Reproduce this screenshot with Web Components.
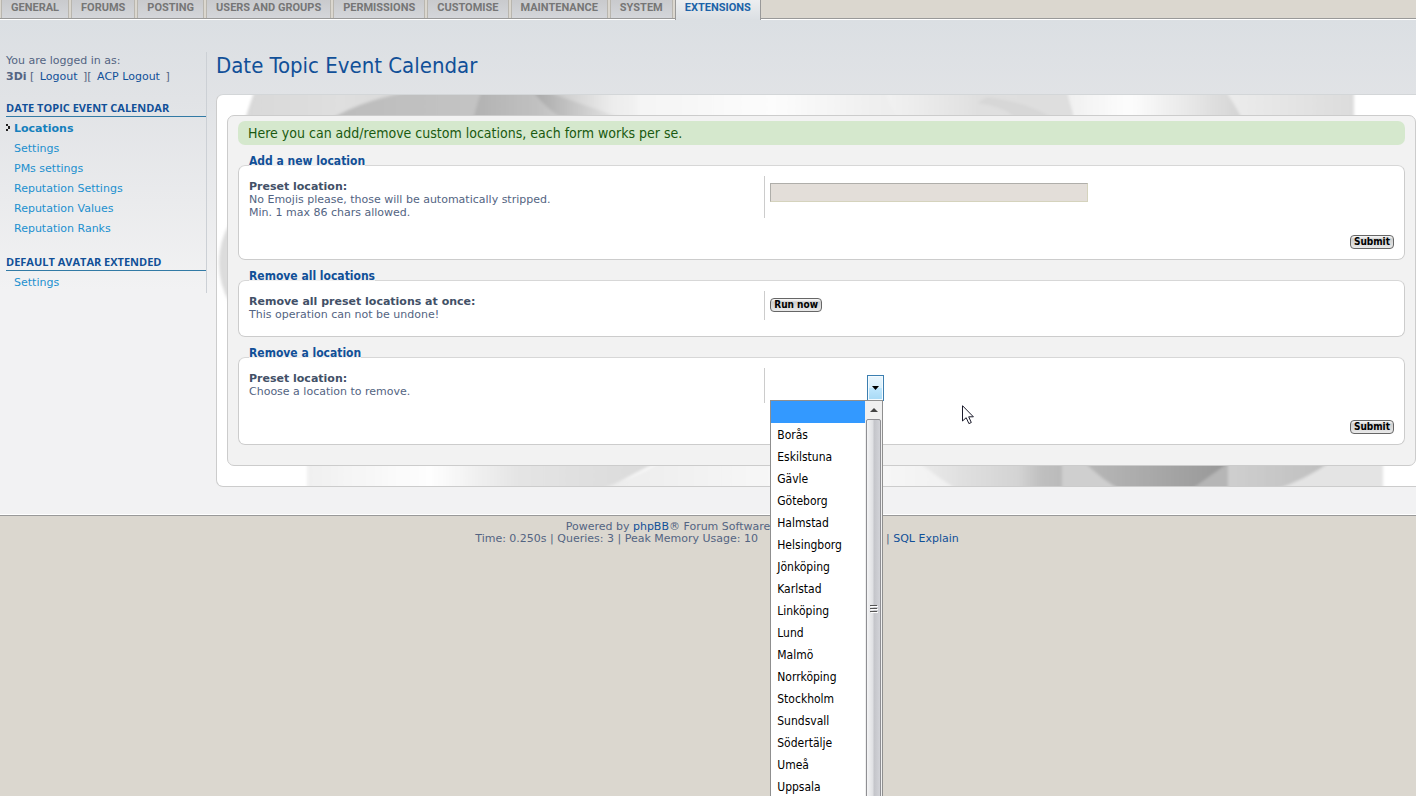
<!DOCTYPE html>
<html lang="en">
<head>
<meta charset="utf-8">
<title>Date Topic Event Calendar</title>
<style>
html, body { margin: 0; }
body {
  background: #dbd7cf;
  color: #536482;
  font: 11px/16px "DejaVu Sans", Verdana, sans-serif;
  overflow: hidden;
}
</style>
</head>
<body>
<acp-app></acp-app>

<template id="tabs-template">
<style>
:host { display: block; }
ul { display: flex; gap: 2px; margin: 0; padding: 0 0 0 1px; list-style: none; height: 20px;
  background: linear-gradient(#999, #999) 0 18px / 100% 1px no-repeat, linear-gradient(#fff, #fff) 0 19px / 100% 1px no-repeat; }
a { display: block; box-sizing: border-box; height: 18px; padding: 0 9px; border: solid #b9b6af; border-width: 0 1px;
  background: linear-gradient(#c9cacd, #d4d6da); color: #767676; text-decoration: none;
  font: bold 11px/16px Roboto, "Liberation Sans", sans-serif; text-transform: uppercase; }
a[aria-current] { height: 20px; border-color: #999; color: #1c63a8; background: linear-gradient(#eceef0, #dbdfe3); }
</style>
<nav aria-label="Sections"><ul></ul></nav>
</template>

<template id="menu-template">
<style>
:host { display: block; box-sizing: border-box; width: 201px; border-right: 1px solid #ccd0d5; }
p { margin: 0; padding-top: 1px; }
p a { padding: 0 2px; color: #115098; text-decoration: none; }
b { color: #536482; }
h2 { margin: 16px 0 2px; padding-bottom: 1px; border-bottom: 1px solid #327aa5; color: #115098;
  font: bold 11px/14px "Open Sans", sans-serif; text-transform: uppercase; }
ul { margin: 0; padding: 0; list-style: none; }
li { position: relative; padding-left: 8px; line-height: 20px; }
li a { color: #1c90cf; text-decoration: none; }
li a[aria-current] { font-weight: bold; color: #1580bd; }
svg { position: absolute; left: 0; top: 5px; }
</style>
<p>You are logged in as:<br><b>3Di</b> [ <a href="#">Logout</a> ][ <a href="#">ACP Logout</a> ]</p>
<nav aria-label="Modules"></nav>
</template>

<template id="fieldset-template">
<style>
:host { display: block; }
fieldset { position: relative; margin: 0; padding: 10px; min-width: 0; background: #fff;
  border: 1px solid #ccc; border-top-color: #d7d7d7; border-radius: 7px; }
legend { position: absolute; top: -11px; left: 10px; padding: 0; color: #115098;
  background: linear-gradient(#f2f2f2 11px, transparent 11px);
  font: bold 12px/12px "DejaVu Sans Condensed", "DejaVu Sans", Tahoma, sans-serif; }
.row { display: grid; grid-template-columns: 45fr 55fr; margin-bottom: 6px; }
.text { padding-top: 4px; margin-bottom: -1px; line-height: 13px; }
.text ::slotted(label) { display: block; font-weight: bold; color: #425067; }
.field { display: flex; align-items: flex-start; border-left: 1px solid #ccc; padding: 7px 0 2px 5px; }
.actions { display: flex; justify-content: flex-end; }
.actions ::slotted(button) { margin-top: 11px; }
</style>
<fieldset>
  <legend></legend>
  <div class="row">
    <div class="text"><slot name="label"></slot><slot name="hint"></slot></div>
    <div class="field"><slot name="field"></slot></div>
  </div>
  <div class="actions"><slot name="action"></slot></div>
</fieldset>
</template>

<template id="list-template">
<style>
:host { position: absolute; z-index: 2; top: 25px; left: 0; box-sizing: border-box; width: 113px; height: 442px;
  display: grid; grid-template-columns: 1fr 17px; background: #fff; border: 1px solid #8f8f8f; color: #000;
  font: 12px/24px "DejaVu Sans Condensed", "DejaVu Sans", Tahoma, sans-serif; }
ul { margin: 0; padding: 0; list-style: none; }
li { height: 22px; padding-left: 6px; }
li[aria-selected="true"] { background: #3399ff; }
.bar { display: flex; flex-direction: column; background: #f0f0f0; }
.up { height: 18px; display: grid; place-items: center; }
.thumb { height: 380px; margin: 0 1px; box-sizing: border-box; border: 1px solid #8f8f93; border-radius: 2px;
  background: linear-gradient(90deg, #f4f4f5, #dfe0e3 45%, #c4c5ca 55%, #d2d3d8); display: grid; place-items: center; }
</style>
<ul role="listbox" aria-label="Locations"></ul>
<div class="bar" aria-hidden="true">
  <div class="up"><svg width="8" height="4" viewBox="0 0 8 4"><path d="M0 4 4 0 8 4z" fill="#444"/></svg></div>
  <div class="thumb"><svg width="8" height="9" viewBox="0 0 8 9" shape-rendering="crispEdges"><path d="M0 .5h7M0 3.500h7M0 6.500h7" stroke="#555"/><path d="M1 1.500h7M1 4.500h7M1 7.500h7" stroke="#fff"/></svg></div>
</div>
</template>

<template id="swirl-template">
<style>:host { position: absolute; inset: 0; overflow: hidden; border-radius: 6px; } svg { display: block; width: 100%; height: 100%; }</style>
<svg viewBox="0 0 1209 391" preserveAspectRatio="none" aria-hidden="true">
  <defs>
    <filter id="soft" x="-5%" y="-5%" width="110%" height="110%"><feGaussianBlur stdDeviation="1.5"/></filter>
    <linearGradient id="t1"><stop offset="0" stop-color="#d8d8d8"/><stop offset=".35" stop-color="#dfdfdf"/><stop offset="1" stop-color="#cfcfcf"/></linearGradient>
    <linearGradient id="t2"><stop offset="0" stop-color="#bcbcbc"/><stop offset="1" stop-color="#c5c5c5"/></linearGradient>
    <linearGradient id="t3"><stop offset="0" stop-color="#b2b2b2"/><stop offset=".4" stop-color="#c2c2c2"/><stop offset=".8" stop-color="#ececec"/><stop offset="1" stop-color="#f4f4f4"/></linearGradient>
    <linearGradient id="t4"><stop offset="0" stop-color="#a8a8a8"/><stop offset="1" stop-color="#ececec"/></linearGradient>
    <linearGradient id="t5"><stop offset="0" stop-color="#f4f4f4"/><stop offset=".4" stop-color="#fcfcfc"/><stop offset=".7" stop-color="#efefef"/><stop offset="1" stop-color="#e8e8e8"/></linearGradient>
    <linearGradient id="t6"><stop offset="0" stop-color="#f2f2f2"/><stop offset=".5" stop-color="#dfdfdf"/><stop offset="1" stop-color="#dedede"/></linearGradient>
    <linearGradient id="t7"><stop offset="0" stop-color="#f0f0f0"/><stop offset=".35" stop-color="#fdfdfd"/><stop offset="1" stop-color="#d2d2d2"/></linearGradient>
    <linearGradient id="t8"><stop offset="0" stop-color="#ececec"/><stop offset="1" stop-color="#dcdcdc"/></linearGradient>
    <linearGradient id="b1"><stop offset="0" stop-color="#f0f0f0"/><stop offset=".35" stop-color="#fefefe"/><stop offset=".6" stop-color="#e4e4e4"/><stop offset="1" stop-color="#dadada"/></linearGradient>
    <linearGradient id="b2"><stop offset="0" stop-color="#ebebeb"/><stop offset=".6" stop-color="#fafafa"/><stop offset="1" stop-color="#f0f0f0"/></linearGradient>
    <linearGradient id="b3"><stop offset="0" stop-color="#eaeaea"/><stop offset=".7" stop-color="#d3d3d3"/><stop offset=".85" stop-color="#c0c0c0"/><stop offset="1" stop-color="#bababa"/></linearGradient>
    <linearGradient id="b4"><stop offset="0" stop-color="#b8b8b8"/><stop offset="1" stop-color="#979797"/></linearGradient>
    <linearGradient id="b5"><stop offset="0" stop-color="#cfcfcf"/><stop offset="1" stop-color="#bebebe"/></linearGradient>
  </defs>
  <g filter="url(#soft)">
    <path d="M38-5Q33 8 28 25H300V-5z" fill="url(#t1)"/>
    <path d="M112 25Q150 2 205-5H300V25z" fill="url(#t2)"/>
    <path d="M265-5Q260 8 256 25H430V-5z" fill="url(#t3)"/>
    <path d="M315-5Q332 18 350 25H410Q350 4 325-5z" fill="url(#t4)"/>
    <path d="M420-5H760V25H420z" fill="url(#t5)"/>
    <path d="M668-5Q672 10 682 25H858L850-5z" fill="url(#t6)"/>
    <path d="M760 8Q790 12 800 25H838Q815 8 770 2z" fill="#d0d0d0" opacity=".5"/>
    <path d="M850-5Q853 12 860 25H1030L1010-5z" fill="url(#t7)"/>
    <path d="M1008-5Q1018 10 1026 25H1137V-5z" fill="url(#t8)"/>
    <ellipse cx="38" cy="168" rx="36" ry="55" fill="#dcdcdc"/>
    <path d="M90 366H442L385 396H90z" fill="url(#b1)"/>
    <path d="M445 366H750V396H378Q415 384 445 366z" fill="url(#b2)"/>
    <path d="M700 366H845V396H742Q720 382 700 366z" fill="url(#b3)"/>
    <path d="M845 366H1010V396H845z" fill="#cfcfcf"/>
    <path d="M866 366Q886 386 906 396H972Q1000 380 1014 366z" fill="url(#b4)"/>
    <path d="M1014 366 972 396H1011V366z" fill="#b6b6b6"/>
    <path d="M1011 366H1115Q1090 384 1060 396H1011z" fill="url(#b5)"/>
    <path d="M1115 366H1166V396H1055Q1090 384 1115 366z" fill="#e4e4e4"/>
  </g>
</svg>
</template>

<template id="app-template">
<style>
:host { display: block; position: relative; min-height: 100vh; overflow: hidden; }
.content { display: grid; grid-template-columns: 201px minmax(0, 1fr); gap: 9px; align-items: start; padding: 32px 0 28px 6px;
  background: linear-gradient(#dbdfe3 0, #e1e3e6 80px, #f2f2f3 270px); border-bottom: 1px solid #999; box-shadow: inset 0 -1px #fff; }
h1 { margin: 0; padding: 1px 0 15px; color: #115098; font: normal 22px/26px "DejaVu Sans Condensed", "DejaVu Sans", "Trebuchet MS", sans-serif; }
.panel { position: relative; margin-right: -11px; padding: 20px 10px; background: #fff; border: 1px solid #ccc; border-top-color: #d3d6d8; border-radius: 7px; }
.inner { position: relative; display: flex; flex-direction: column; gap: 20px; padding: 5px 10px 20px; background: #f2f2f2;
  border: 1px solid #ccc; border-radius: 7px; }
.note { margin: 0; padding: 4px 10px; border-radius: 7px; background: #d5e8cd; color: #1a5a10;
  font: 14px/16px "DejaVu Sans Condensed", "DejaVu Sans", Tahoma, sans-serif; }
button { height: 14px; padding: 0 3px; border: 1px solid #666; border-radius: 4px; background: linear-gradient(#f4f4f4 1px, #cfcfcf 3px, #e9e9e9); color: #000;
  font: bold 10px/12px "DejaVu Sans Condensed", "DejaVu Sans", Tahoma, sans-serif; }
input { box-sizing: border-box; width: 318px; height: 19px; padding: 0 4px; border: 1px solid #d5d3bd; border-top-color: #afaeaa; border-left-color: #afaeaa; border-radius: 0; background: #e3ded9; font: inherit; }
.drop { position: relative; width: 114px; height: 26px; }
select { appearance: none; display: block; width: 114px; height: 26px; border: 0; padding: 0 20px 0 6px; background: #fff; font: inherit; }
.arrow { position: absolute; top: 0; right: 0; box-sizing: border-box; width: 17px; height: 26px; display: grid; place-items: center;
  border: 1px solid #3c7fb1; background: linear-gradient(#eaf6fd, #d9f0fc 48%, #bee6fd 52%, #a7d9f5); box-shadow: inset 0 0 0 1px #f4fbff; pointer-events: none; }
footer { display: flex; flex-direction: column; align-items: center; padding: 5px 0 0 18px; line-height: 12px; }
footer p { display: flex; margin: 0; white-space: pre; }
footer .credit { padding-right: 98px; }
footer .stats { gap: 128px; }
footer a { color: #115098; text-decoration: none; }
.pointer { position: absolute; left: 962px; top: 405px; }
</style>
<acp-tabs></acp-tabs>
<div class="content">
  <acp-menu></acp-menu>
  <main>
    <h1>Date Topic Event Calendar</h1>
    <div class="panel">
      <panel-swirl></panel-swirl>
      <div class="inner">
        <p class="note">Here you can add/remove custom locations, each form works per se.</p>
        <acp-fieldset legend="Add a new location">
          <label slot="label" for="new-location">Preset location:</label>
          <span slot="hint">No Emojis please, those will be automatically stripped.<br>Min. 1 max 86 chars allowed.</span>
          <input slot="field" id="new-location" type="text" maxlength="86">
          <button slot="action" type="submit">Submit</button>
        </acp-fieldset>
        <acp-fieldset legend="Remove all locations">
          <label slot="label" for="purge">Remove all preset locations at once:</label>
          <span slot="hint">This operation can not be undone!</span>
          <button slot="field" id="purge" type="button">Run now</button>
        </acp-fieldset>
        <acp-fieldset legend="Remove a location">
          <label slot="label" for="old-location">Preset location:</label>
          <span slot="hint">Choose a location to remove.</span>
          <div slot="field" class="drop">
            <select id="old-location"><option selected></option></select>
            <span class="arrow"><svg width="7" height="4" viewBox="0 0 7 4"><path d="M0 0H7L3.500 4z"/></svg></span>
            <location-list></location-list>
          </div>
          <button slot="action" type="submit">Submit</button>
        </acp-fieldset>
      </div>
    </div>
  </main>
</div>
<footer>
  <p class="credit"><span>Powered by <a href="#">phpBB</a>® Forum Software</span></p>
  <p class="stats"><span>Time: 0.250s | Queries: 3 | Peak Memory Usage: 10</span><span>| <a href="#">SQL Explain</a></span></p>
</footer>
<svg class="pointer" width="12" height="20" viewBox="0 0 12 20" aria-hidden="true"><path d="M.5.700V16L4.200 12.700 6.900 18.600 9.300 17.500 6.700 11.800H11.400z" fill="#fff" stroke="#1b1b2b"/></svg>
</template>

<script>
class Base extends HTMLElement {
  constructor(id) {
    super();
    this.attachShadow({ mode: "open" }).append(document.getElementById(id).content.cloneNode(true));
  }
}

customElements.define("acp-tabs", class extends Base {
  constructor() {
    super("tabs-template");
    const names = ["General", "Forums", "Posting", "Users and groups", "Permissions", "Customise", "Maintenance", "System", "Extensions"];
    this.shadowRoot.querySelector("ul").innerHTML = names.map(n =>
      `<li><a href="#"${n === "Extensions" ? ' aria-current="page"' : ""}>${n}</a></li>`).join("");
  }
});

customElements.define("acp-menu", class extends Base {
  constructor() {
    super("menu-template");
    const groups = [
      ["Date Topic Event Calendar", ["Locations", "Settings", "PMs settings", "Reputation Settings", "Reputation Values", "Reputation Ranks"]],
      ["Default Avatar Extended", ["Settings"]]
    ];
    const mark = '<svg width="4" height="7" viewBox="0 0 4 7" shape-rendering="crispEdges" aria-hidden="true"><path d="M0 0h2v2h-2zM2 2h2v3h-2zM0 5h2v2h-2z" fill="#222"/></svg>';
    this.shadowRoot.querySelector("nav").innerHTML = groups.map(([title, items]) =>
      `<h2>${title}</h2><ul>${items.map(i => i === "Locations"
        ? `<li>${mark}<a href="#" aria-current="page">${i}</a></li>`
        : `<li><a href="#">${i}</a></li>`).join("")}</ul>`).join("");
  }
});

customElements.define("acp-fieldset", class extends Base {
  constructor() { super("fieldset-template"); }
  connectedCallback() { this.shadowRoot.querySelector("legend").textContent = this.getAttribute("legend"); }
});

customElements.define("location-list", class extends Base {
  constructor() {
    super("list-template");
    const cities = ["", "Borås", "Eskilstuna", "Gävle", "Göteborg", "Halmstad", "Helsingborg", "Jönköping", "Karlstad", "Linköping",
      "Lund", "Malmö", "Norrköping", "Stockholm", "Sundsvall", "Södertälje", "Umeå", "Uppsala"];
    this.shadowRoot.querySelector("ul").innerHTML = cities.map((c, i) =>
      `<li role="option" aria-selected="${i === 0}">${c}</li>`).join("");
  }
});

customElements.define("panel-swirl", class extends Base { constructor() { super("swirl-template"); } });
customElements.define("acp-app", class extends Base { constructor() { super("app-template"); } });
</script>
</body>
</html>
